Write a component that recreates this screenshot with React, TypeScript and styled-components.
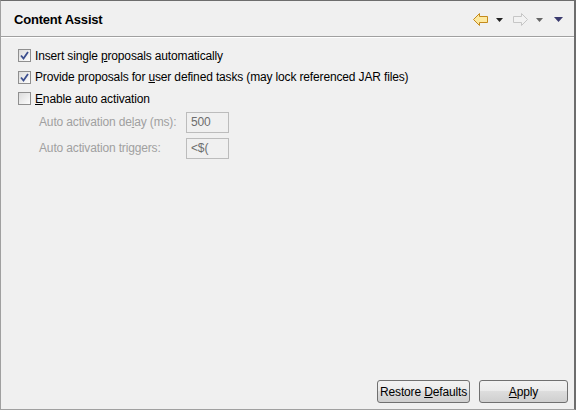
import React from "react";
import styled, { createGlobalStyle } from "styled-components";

const Global = createGlobalStyle`
  html, body { margin: 0; padding: 0; background: #f0f0f0; }
  body { font-family: "Liberation Sans", Arial, sans-serif; font-size: 12px; color: #000; letter-spacing: -0.15px; }
`;

const Frame = styled.div`
  box-sizing: border-box;
  width: 576px;
  height: 410px;
  display: flex;
  flex-direction: column;
  background: #f0f0f0;
  border-top: 1px solid #6d6d6d;
  border-left: 1px solid #a0a0a0;
  border-right: 2px solid #6d6d6d;
  border-bottom: 1px solid #a0a0a0;
`;

const Header = styled.div`
  height: 35px;
  display: flex;
  align-items: center;
  padding: 0 11px 0 13px;
  border-bottom: 1px solid #a0a0a0;
  box-shadow: 0 1px 0 #ffffff;
`;

const Title = styled.div`
  flex: 1;
  font-weight: bold;
  font-size: 13px;
  letter-spacing: -0.2px;
  padding-top: 2px;
`;

const Tools = styled.div`
  display: flex;
  align-items: center;
  padding-top: 2px;
`;

const Gap = styled.span<{ $w: number }>`
  width: ${(p) => p.$w}px;
`;

const Body = styled.div`
  flex: 1;
  padding: 8px 0 0 17px;
  display: flex;
  flex-direction: column;
`;

const CheckRow = styled.label`
  display: flex;
  align-items: center;
  height: 21.5px;
  gap: 4px;
`;

const Box = styled.span`
  box-sizing: border-box;
  width: 13px;
  height: 13px;
  border: 1px solid #8f8f8f;
  background: linear-gradient(135deg, #dcdcdc, #fdfdfd);
  display: flex;
  align-items: center;
  justify-content: center;
`;

const Fields = styled.div`
  display: grid;
  grid-template-columns: 147px 43px;
  row-gap: 5px;
  padding: 2px 0 0 21px;
  align-items: center;
  color: #a0a0a0;
`;

const Input = styled.div`
  box-sizing: border-box;
  width: 43px;
  height: 21px;
  border: 1px solid #bcbcbc;
  background: #f0f0f0;
  padding: 2px 0 0 4px;
  color: #6d6d6d;
`;

const Footer = styled.div`
  display: flex;
  justify-content: flex-end;
  gap: 9px;
  padding: 0 6px 6px 0;
`;

const Button = styled.button<{ $w: number }>`
  width: ${(p) => p.$w}px;
  height: 23px;
  font-family: "Liberation Sans", Arial, sans-serif;
  font-size: 12px;
  letter-spacing: -0.15px;
  color: #000;
  border: 1px solid #707070;
  border-radius: 3px;
  background: linear-gradient(#f2f2f2 0%, #ebebeb 45%, #dddddd 50%, #cfcfcf 100%);
  padding: 0;
`;

const U = styled.span`
  text-decoration: underline;
`;

const Check = () => (
  <svg width="9" height="9" viewBox="0 0 9 9">
    <path d="M1 4.5 L3.5 7.5 L8 1" fill="none" stroke="#3c4f8f" strokeWidth="1.8" />
  </svg>
);

const Tri = ({ color }: { color: string }) => (
  <svg width="7" height="4" viewBox="0 0 7 4">
    <path d="M0 0 H7 L3.5 4 Z" fill={color} />
  </svg>
);

const Arrow = ({ dir, fill, stroke }: { dir: "l" | "r"; fill: string; stroke: string }) => (
  <svg width="15" height="13" viewBox="0 0 15 13" style={{ transform: dir === "r" ? "scaleX(-1)" : undefined }}>
    <path d="M0.5 6.5 L6.5 0.5 V3.5 H14.5 V9.5 H6.5 V12.5 Z" fill={fill} stroke={stroke} />
  </svg>
);

export default function App() {
  return (
    <>
      <Global />
      <Frame>
        <Header>
          <Title>Content Assist</Title>
          <Tools>
            <Arrow dir="l" fill="#fde9a0" stroke="#c48a1c" />
            <Gap $w={8} />
            <Tri color="#222" />
            <Gap $w={10} />
            <Arrow dir="r" fill="#f2f2f2" stroke="#c6c6c6" />
            <Gap $w={8} />
            <Tri color="#666" />
            <Gap $w={11} />
            <svg width="9" height="5" viewBox="0 0 9 5">
              <path d="M0 0 H9 L4.5 5 Z" fill="#3a3a6e" />
            </svg>
          </Tools>
        </Header>
        <Body>
          <CheckRow>
            <Box><Check /></Box>
            <span>Insert single <U>p</U>roposals automatically</span>
          </CheckRow>
          <CheckRow>
            <Box><Check /></Box>
            <span>Provide proposals for <U>u</U>ser defined tasks (may lock referenced JAR files)</span>
          </CheckRow>
          <CheckRow>
            <Box />
            <span><U>E</U>nable auto activation</span>
          </CheckRow>
          <Fields>
            <span>Auto activation de<U>l</U>ay (ms):</span>
            <Input>500</Input>
            <span>Auto activation triggers:</span>
            <Input>&lt;$(</Input>
          </Fields>
        </Body>
        <Footer>
          <Button $w={93}>Restore <U>D</U>efaults</Button>
          <Button $w={89}><U>A</U>pply</Button>
        </Footer>
      </Frame>
    </>
  );
}
